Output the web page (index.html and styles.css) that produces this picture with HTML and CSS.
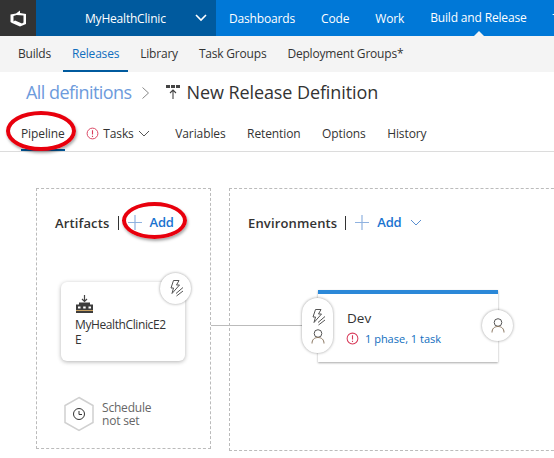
FILE: index.html
```html
<!DOCTYPE html>
<html lang="en">
<head>
    <meta charset="UTF-8">
    <title>New Release Definition</title>
    <link rel="stylesheet" href="styles.css">
</head>
<body>
    <header class="topbar">
        <div class="logo">
            <svg width="17" height="17" viewBox="0 0 17 17"><path d="M0.500 4.500L6 3.500 10 0.500V3L16 4V14L10 16.500 2 13 0.500 12ZM3.500 6V11.500L5 10.500 12 13.500 13.500 12.500V5.500L6.500 5Z" fill="#fff" fill-rule="evenodd"/></svg>
        </div>
        <div class="project">
            <span class="project-name">MyHealthClinic</span>
            <svg width="12" height="8" viewBox="0 0 12 8"><path d="M1 1 L6 6 L11 1" fill="none" stroke="#fff" stroke-width="1.6"/></svg>
        </div>
        <nav class="hubs">
            <a>Dashboards</a>
            <a>Code</a>
            <a>Work</a>
            <a class="active">Build and Release</a>
            <a>T</a>
        </nav>
    </header>

    <nav class="subnav">
        <a>Builds</a>
        <a class="active">Releases</a>
        <a>Library</a>
        <a>Task Groups</a>
        <a>Deployment Groups*</a>
    </nav>

    <div class="title-row">
        <span class="crumb">All definitions</span>
        <svg class="crumb-sep" width="7" height="12" viewBox="0 0 7 12"><path d="M0.500 0.500 L6.500 6 L0.500 11.500" fill="none" stroke="#888" stroke-width="1"/></svg>
        <svg class="def-icon" width="14" height="14" viewBox="0 0 14 14"><path d="M0 0h4v3H0zM5 0h4v3H5zM10 0h4v3h-4z" fill="#444"/><path d="M7 14V5M4 8l3-3 3 3" fill="none" stroke="#444" stroke-width="1.100"/></svg>
        <h1>New Release Definition</h1>
    </div>

    <nav class="tabs">
        <a class="active">Pipeline</a>
        <a class="tab-tasks">
            <svg width="13" height="13" viewBox="0 0 14 14"><circle cx="7" cy="7" r="5.800" fill="none" stroke="#d83b5a" stroke-width="1"/><path d="M7 3.500V8.200M7 9.400V10.800" stroke="#d83b5a" stroke-width="1.200"/></svg>
            <span>Tasks</span>
            <svg width="12" height="7" viewBox="0 0 12 7"><path d="M1 1 L6 6 L11 1" fill="none" stroke="#555" stroke-width="1"/></svg>
        </a>
        <a>Variables</a>
        <a>Retention</a>
        <a>Options</a>
        <a>History</a>
    </nav>

    <main class="canvas">
        <section class="stage stage-artifacts">
            <div class="stage-head">
                <h2>Artifacts</h2>
                <span class="divider"></span>
                <a class="add">
                    <svg width="14" height="15" viewBox="0 0 14 15"><path d="M7 0V15M0 7.500H14" stroke="#8fb2e0" stroke-width="1.200"/></svg>
                    Add
                </a>
            </div>
        </section>

        <section class="stage stage-envs">
            <div class="stage-head">
                <h2>Environments</h2>
                <span class="divider"></span>
                <a class="add">
                    <svg width="14" height="15" viewBox="0 0 14 15"><path d="M7 0V15M0 7.500H14" stroke="#8fb2e0" stroke-width="1.200"/></svg>
                    Add
                    <svg width="12" height="7" viewBox="0 0 12 7"><path d="M1 1 L6 6 L11 1" fill="none" stroke="#5a8fd0" stroke-width="1"/></svg>
                </a>
            </div>
        </section>

        <!-- nodes on the pipeline canvas -->
        <div class="connector"></div>

        <div class="artifact-card">
            <svg width="17" height="18" viewBox="0 0 17 18"><path d="M8.500 0V6.500M6 4L8.500 6.500 11 4" fill="none" stroke="#444" stroke-width="1.200"/><path d="M3 7.500H14V9.500H17V18H0V9.500H3Z" fill="#3c3c3c"/><path d="M2 11.500h2.500v2H2zM7.200 11.500h2.500v2H7.200zM12.500 11.500h2.500v2h-2.500z" fill="#fff"/><path d="M0 15.500H17" stroke="#c9a060" stroke-width="1"/></svg>
            <p>MyHealthClinicE2<br>E</p>
        </div>
        <div class="round-btn trigger-btn">
            <svg width="16" height="17" viewBox="0 0 16 17"><path d="M5.500 0.500H11L8.500 5H11.500L4 13.500 5.500 8H3Z" fill="none" stroke="#555" stroke-width="1"/><path d="M8 13.500L15 7.500M8.500 16L15 11" stroke="#555" stroke-width="1"/></svg>
        </div>

        <div class="schedule">
            <svg width="32" height="36" viewBox="0 0 32 36"><path d="M16 1.500L30 9.500V26.500L16 34.500 2 26.500V9.500Z" fill="#fff" stroke="#d0d0d0" stroke-width="1.500"/><circle cx="16" cy="18" r="5.500" fill="none" stroke="#333" stroke-width="1"/><path d="M16 15V18.500H19" fill="none" stroke="#333" stroke-width="1"/></svg>
            <span>Schedule<br>not set</span>
        </div>

        <div class="env-card">
            <div class="env-name">Dev</div>
            <div class="env-status">
                <svg width="13" height="13" viewBox="0 0 14 14"><circle cx="7" cy="7" r="5.800" fill="none" stroke="#d83b5a" stroke-width="1.100"/><path d="M7 3.500V8.200M7 9.400V10.800" stroke="#d83b5a" stroke-width="1.200"/></svg>
                <a>1 phase, 1 task</a>
            </div>
        </div>
        <div class="pre-deploy">
            <svg width="16" height="17" viewBox="0 0 16 17"><path d="M5.500 0.500H11L8.500 5H11.500L4 13.500 5.500 8H3Z" fill="none" stroke="#555" stroke-width="1"/><path d="M8 13.500L15 7.500M8.500 16L15 11" stroke="#555" stroke-width="1"/></svg>
            <svg width="14" height="15" viewBox="0 0 14 15"><circle cx="7" cy="4.500" r="3.800" fill="none" stroke="#555" stroke-width="1"/><path d="M1 14.500C1 10.500 3.500 8.500 7 8.500S13 10.500 13 14.500" fill="none" stroke="#8a7660" stroke-width="1"/></svg>
        </div>
        <div class="round-btn post-deploy">
            <svg width="14" height="15" viewBox="0 0 14 15"><circle cx="7" cy="4.500" r="3.800" fill="none" stroke="#555" stroke-width="1"/><path d="M1 14.500C1 10.500 3.500 8.500 7 8.500S13 10.500 13 14.500" fill="none" stroke="#8a7660" stroke-width="1"/></svg>
        </div>
    </main>

    <!-- red callouts drawn over the screenshot -->
    <div class="callout callout-pipeline"></div>
    <div class="callout callout-add"></div>
</body>
</html>
```

FILE: styles.css
```css
html, body {
    margin: 0;
    padding: 0;
}

body {
    width: 554px;
    height: 458px;
    overflow: hidden;
    position: relative;
    background-color: #fff;
    color: #333;
    font-family: "Open Sans", "Noto Sans", sans-serif;
    font-size: 12px;
}

/* top bar */
.topbar {
    display: flex;
    height: 36px;
    background-color: #0078d7;
    color: #fff;
}

.logo {
    display: flex;
    flex: none;
    align-items: center;
    justify-content: center;
    width: 36px;
    background-color: #333;
}

.project {
    display: flex;
    flex: none;
    align-items: center;
    width: 180px;
    box-sizing: border-box;
    padding-left: 49px;
    background-color: #005a9e;
}

.project-name {
    width: 110px;
    letter-spacing: -0.2px;
}

.hubs {
    display: flex;
    flex: none;
    align-items: center;
    gap: 26px;
    padding-left: 13px;
    white-space: nowrap;
    letter-spacing: -0.16px;
}

.hubs .active {
    position: relative;
    height: 36px;
    line-height: 36px;
}

.hubs .active::after {
    content: "";
    position: absolute;
    left: 44px;
    bottom: 0;
    border: 5px solid transparent;
    border-top: 0;
    border-bottom-color: #f4f4f4;
}

/* second row */
.subnav {
    display: flex;
    height: 36px;
    padding-left: 9px;
    background-color: #f4f4f4;
    letter-spacing: -0.2px;
}

.subnav a {
    padding: 0 9px;
    line-height: 36px;
    margin-right: 3px;
}

.subnav .active {
    color: #106ebe;
    box-shadow: inset 0 -2px 0 #005a9e;
}

/* title */
.title-row {
    display: flex;
    align-items: center;
    height: 40px;
    padding: 0 0 1px 26px;
}

.crumb {
    font-size: 18px;
    color: #6d9bdc;
    letter-spacing: -0.55px;
}

.crumb-sep {
    margin: 2px 17px 0 10px;
}

.def-icon {
    margin-right: 7px;
}

h1 {
    margin: 0;
    font-size: 18px;
    font-weight: 400;
    letter-spacing: -0.1px;
}

/* tabs */
.tabs {
    display: flex;
    height: 38px;
    padding-left: 21px;
    gap: 21.5px;
    border-bottom: 1px solid #dcdcdc;
    letter-spacing: -0.1px;
}

.tabs a {
    line-height: 41px;
}

.tabs .active {
    box-shadow: inset 0 -2px 0 #005a9e;
}

.tab-tasks {
    display: flex;
    align-items: center;
    gap: 4px;
    height: 41px;
    margin-right: 4px;
}

/* canvas */
.stage {
    position: absolute;
    top: 188px;
    box-sizing: border-box;
    border: 1px dashed #bbb;
}

.stage-artifacts {
    left: 36px;
    width: 175px;
    height: 261px;
}

.stage-envs {
    left: 229px;
    width: 340px;
    height: 263px;
}

.stage-head {
    display: flex;
    align-items: center;
    height: 20px;
    margin: 24px 0 0 18px;
}

h2 {
    margin: 0;
    font-size: 13px;
    font-weight: 600;
    letter-spacing: 0.15px;
}

.divider {
    width: 1px;
    height: 14px;
    margin: 0 9px 0 8px;
    background-color: #333;
}

.add {
    display: flex;
    align-items: center;
    gap: 8px;
    margin-top: -2px;
    color: #1a73d0;
    font-size: 13px;
    font-weight: 600;
    letter-spacing: -0.2px;
}

.connector {
    position: absolute;
    left: 211px;
    top: 325px;
    width: 92px;
    height: 1px;
    background-color: #bbb;
}

.artifact-card {
    position: absolute;
    left: 61px;
    top: 282px;
    width: 124px;
    height: 79px;
    box-sizing: border-box;
    padding: 13px 14px;
    border-radius: 6px;
    background-color: #fff;
    box-shadow: 0 1px 4px rgba(0, 0, 0, 0.3);
}

.artifact-card svg {
    display: block;
    margin-left: 1px;
}

.artifact-card p {
    margin: 4px 0 0;
    line-height: 15px;
    letter-spacing: -0.4px;
}

.round-btn {
    position: absolute;
    display: flex;
    align-items: center;
    justify-content: center;
    width: 31px;
    height: 31px;
    border-radius: 50%;
    background-color: #fff;
    box-shadow: 0 0 3px rgba(0, 0, 0, 0.4);
}

.trigger-btn {
    left: 160px;
    top: 273px;
}

.post-deploy {
    left: 482px;
    top: 310px;
}

.schedule {
    position: absolute;
    left: 63px;
    top: 396px;
    display: flex;
    align-items: center;
    gap: 7px;
    color: #666;
    line-height: 13px;
    letter-spacing: -0.2px;
}

.env-card {
    position: absolute;
    left: 318px;
    top: 290px;
    width: 180px;
    height: 72px;
    box-sizing: border-box;
    padding: 16px 0 0 29px;
    border-top: 4px solid #2b88d8;
    background-color: #fff;
    box-shadow: 0 1px 2px rgba(0, 0, 0, 0.35);
}

.env-name {
    font-size: 13.5px;
    line-height: 16px;
}

.env-status {
    display: flex;
    align-items: center;
    gap: 6px;
    margin: 5px 0 0 -1px;
    color: #106ebe;
    font-size: 11px;
}

.pre-deploy {
    position: absolute;
    left: 302px;
    top: 298px;
    width: 31px;
    height: 55px;
    box-sizing: border-box;
    padding-top: 11px;
    display: flex;
    flex-direction: column;
    align-items: center;
    gap: 3px;
    border-radius: 16px;
    background-color: #fff;
    box-shadow: 0 0 3px rgba(0, 0, 0, 0.4);
}

/* red ellipses */
.callout {
    position: absolute;
    box-sizing: border-box;
    border: 4.5px solid #e8000d;
    border-radius: 50%;
    box-shadow: 1px 2px 3px rgba(0, 0, 0, 0.35);
}

.callout-pipeline {
    left: 6px;
    top: 111px;
    width: 70px;
    height: 40px;
}

.callout-add {
    left: 122px;
    top: 202px;
    width: 65px;
    height: 37px;
}
```
